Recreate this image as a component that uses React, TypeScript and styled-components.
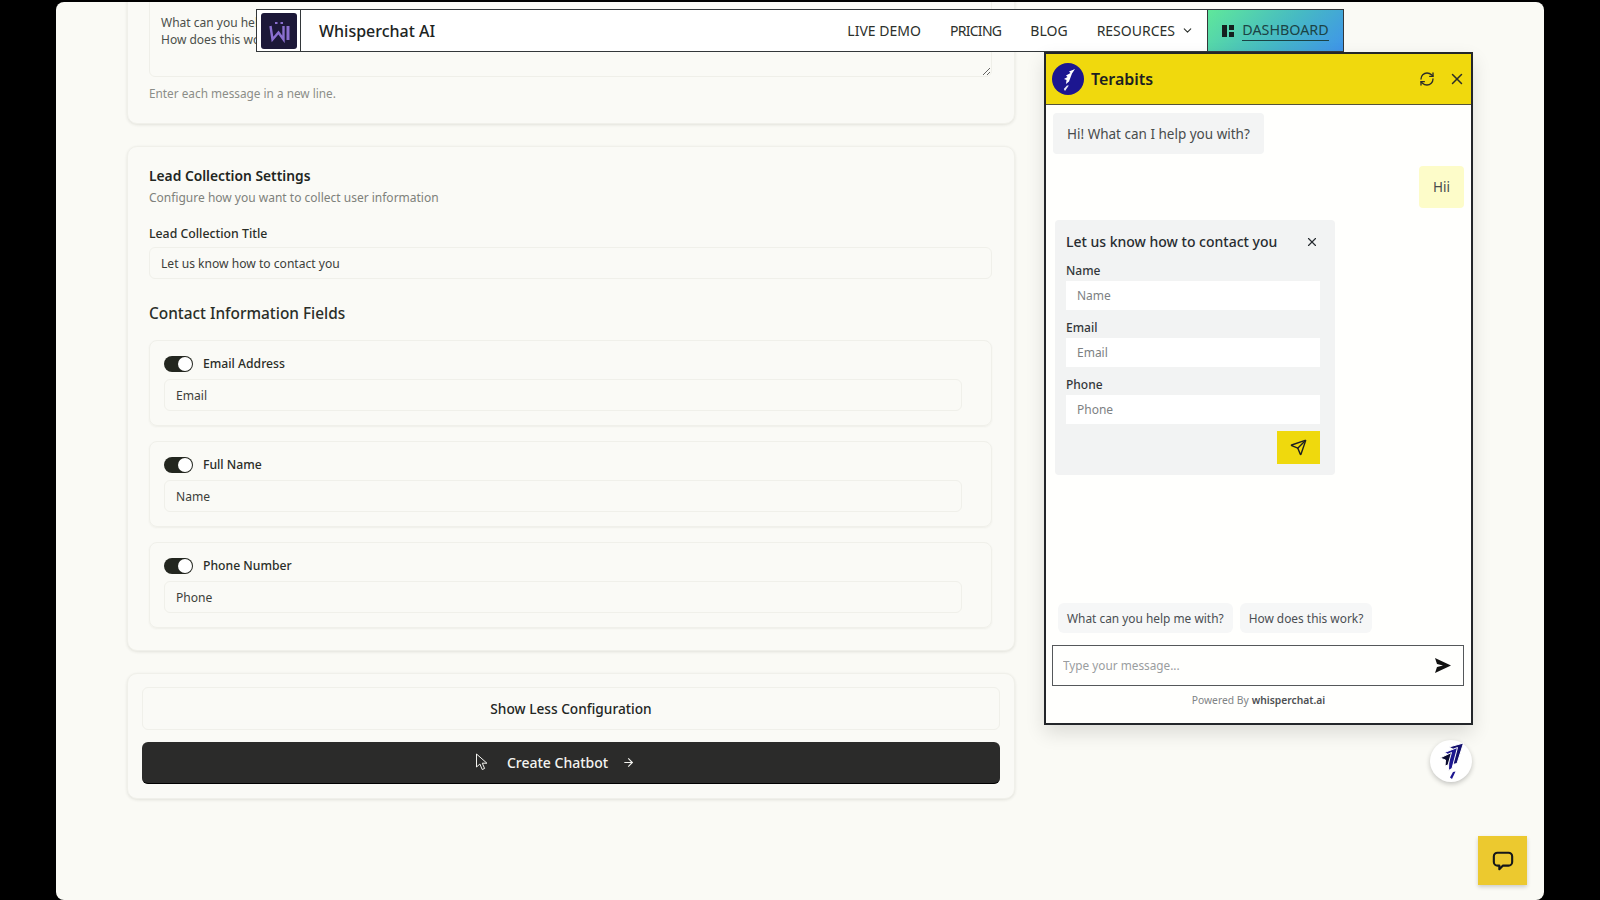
import React from "react";
import styled, { createGlobalStyle } from "styled-components";
import { ArrowRight, ChevronDown, RefreshCw, Send, X } from "lucide-react";

const FONT = `"Noto Sans", "Liberation Sans", sans-serif`;

const GlobalStyle = createGlobalStyle`
  html, body { margin: 0; height: 100%; background: #000; }
  * { box-sizing: border-box; }
  body { font-family: ${FONT}; color: #1f2420; }
  input, textarea, button { font-family: ${FONT}; }
`;

const Backdrop = styled.div`
  width: 1600px;
  height: 900px;
  background: #000;
  padding: 2px 56px 0;
  overflow: hidden;
`;

const Screen = styled.main`
  position: relative;
  width: 1488px;
  height: 898px;
  background: #fafaf5;
  border-radius: 8px;
  overflow: hidden;
`;

const FormColumn = styled.section`
  width: 888px;
  margin: -30px 0 0 71px;
  display: flex;
  flex-direction: column;
  gap: 22px;
`;

const Card = styled.div`
  background: #fafaf6;
  border: 1px solid #f0f0ea;
  border-radius: 10px;
  box-shadow: 0 1px 3px rgba(60, 60, 40, 0.12);
  padding: 22px 22px 21px 21px;
`;

const MessagesBox = styled.textarea`
  display: block;
  width: 100%;
  height: 82px;
  padding: 18px 11px 0;
  border: 1px solid #efefe9;
  border-radius: 6px;
  background: #fafaf6;
  font-size: 12px;
  line-height: 17px;
  color: #4b4f4a;
  outline: none;
`;

const Hint = styled.p`
  margin: 7px 0 0;
  font-size: 11.8px;
  line-height: 18px;
  color: #8b8d88;
`;

const LeadCard = styled(Card)`
  height: 505px;
  padding-top: 19px;
`;

const CardTitle = styled.h2`
  margin: 0;
  font-size: 13.8px;
  line-height: 19px;
  font-weight: 600;
  color: #22261f;
`;

const CardSub = styled.p`
  margin: 4px 0 0;
  font-size: 12px;
  line-height: 18px;
  color: #7e817b;
`;

const FieldLabel = styled.label`
  display: block;
  margin: 18px 0 5px;
  font-size: 12.3px;
  line-height: 17px;
  font-weight: 500;
  color: #2a2e28;
`;

const TextField = styled.input`
  display: block;
  width: 100%;
  height: 32px;
  padding: 0 11px;
  border: 1px solid #f0f0ea;
  border-radius: 6px;
  background: #fafaf6;
  font-size: 12.1px;
  color: #3c403a;
  outline: none;
`;

const SectionTitle = styled.h3`
  margin: 24px 0 15px;
  font-size: 15.4px;
  line-height: 22px;
  font-weight: 500;
  color: #2a2e28;
`;

const FieldList = styled.div`
  display: flex;
  flex-direction: column;
  gap: 15px;
`;

const FieldCard = styled.div`
  height: 86px;
  padding: 15px 29px 0 14px;
  border: 1px solid #f0f0ea;
  border-radius: 8px;
  box-shadow: 0 1px 2px rgba(60, 60, 40, 0.06);
`;

const FieldHead = styled.div`
  display: flex;
  align-items: center;
  gap: 10px;
  height: 15px;
  margin-bottom: 8px;
  font-size: 12.2px;
  font-weight: 500;
  color: #2a2e28;
`;

const Toggle = styled.span`
  position: relative;
  width: 29px;
  height: 16px;
  border-radius: 8px;
  background: #23261f;
  &::after {
    content: "";
    position: absolute;
    top: 1px;
    right: 1px;
    width: 14px;
    height: 14px;
    border-radius: 50%;
    background: #fff;
  }
`;

const ActionCard = styled(Card)`
  height: 126px;
  padding: 13px 14px;
  display: flex;
  flex-direction: column;
  gap: 12px;
`;

const GhostButton = styled.button`
  height: 43px;
  border: 1px solid #f0f0ea;
  border-radius: 6px;
  background: #fafaf6;
  font-size: 13.7px;
  font-weight: 500;
  color: #23261f;
`;

const PrimaryButton = styled.button`
  position: relative;
  height: 42px;
  display: flex;
  align-items: center;
  justify-content: center;
  gap: 14px;
  border: none;
  border-bottom: 1px solid #000;
  border-radius: 6px;
  background: #2b2b2a;
  font-size: 14px;
  font-weight: 500;
  color: #f4f4f0;
`;

const PointerIcon = styled.svg`
  position: absolute;
  left: 333px;
  top: 11px;
  width: 14px;
  height: 18px;
`;

const Navbar = styled.header`
  position: absolute;
  left: 200px;
  top: 7px;
  width: 1088px;
  height: 43px;
  display: flex;
  align-items: stretch;
  background: #fff;
  border: 1px solid #33373a;
`;

const LogoBox = styled.div`
  width: 44px;
  display: flex;
  align-items: center;
  justify-content: center;
  border-right: 1px solid #33373a;
`;

const Brand = styled.div`
  margin-left: 18px;
  flex: 1;
  align-self: center;
  font-size: 16px;
  font-weight: 500;
  color: #20241f;
`;

const NavLinks = styled.nav`
  display: flex;
  align-items: center;
  gap: 29px;
  margin-right: 13px;
`;

const NavLink = styled.a<{ $squeeze?: boolean }>`
  display: flex;
  align-items: center;
  gap: 6px;
  font-size: 14px;
  letter-spacing: ${(p) => (p.$squeeze ? "-0.7px" : "0")};
  color: #2c302c;
`;

const DashboardLink = styled.a`
  width: 136px;
  display: flex;
  align-items: center;
  justify-content: center;
  gap: 8px;
  background: linear-gradient(135deg, #5fe89a 0%, #46b9c4 55%, #3f94ea 100%);
  border-left: 1px solid #33373a;
  font-size: 14.3px;
  color: #1b4344;
`;

const DashLabel = styled.span`
  border-bottom: 1.5px solid #1b4344;
  line-height: 19px;
  padding-bottom: 1px;
`;

const ChatWindow = styled.aside`
  position: absolute;
  left: 988px;
  top: 50px;
  width: 429px;
  height: 673px;
  display: flex;
  flex-direction: column;
  background: #fffffd;
  border: 2px solid #23262a;
  box-shadow: 0 8px 18px rgba(0, 0, 0, 0.12);
`;

const ChatHeader = styled.div`
  height: 51px;
  flex: none;
  display: flex;
  align-items: center;
  gap: 7px;
  padding: 0 5px 0 6px;
  background: #f0d90d;
  border-bottom: 1px solid #55533a;
`;

const ChatName = styled.div`
  flex: 1;
  font-size: 16px;
  font-weight: 600;
  color: #1d1f22;
`;

const HeaderAction = styled.span`
  display: flex;
  margin-left: 6px;
  color: #2b2d2a;
`;

const ChatBody = styled.div`
  flex: 1;
  display: flex;
  flex-direction: column;
  align-items: flex-start;
  padding: 8px 7px 0 6px;
`;

const BotBubble = styled.div`
  margin-left: 1px;
  padding: 0 14px;
  height: 41px;
  display: flex;
  align-items: center;
  border-radius: 4px;
  background: #f3f4f4;
  font-size: 13.5px;
  color: #484c4c;
`;

const UserBubble = styled.div`
  align-self: flex-end;
  margin: 12px 0 12px;
  width: 45px;
  height: 42px;
  display: flex;
  align-items: center;
  justify-content: center;
  border-radius: 4px;
  background: #fdfcc9;
  font-size: 13.5px;
  color: #484c4c;
`;

const LeadForm = styled.form`
  margin-left: 3px;
  width: 280px;
  height: 255px;
  padding: 12px 15px 0 11px;
  border-radius: 4px;
  background: #f2f3f3;
`;

const LeadHead = styled.div`
  display: flex;
  align-items: center;
  justify-content: space-between;
  height: 19px;
  padding-right: 1px;
  font-size: 14px;
  font-weight: 500;
  color: #282c30;
`;

const LeadLabel = styled.label`
  display: block;
  margin: 0 0 2px;
  font-size: 12px;
  line-height: 17px;
  font-weight: 500;
  color: #33373a;
`;

const LeadFields = styled.div`
  margin-top: 11px;
  display: flex;
  flex-direction: column;
  gap: 9px;
`;

const LeadInput = styled.input`
  display: block;
  width: 100%;
  height: 29px;
  padding: 0 11px;
  border: none;
  background: #fff;
  font-size: 12px;
  outline: none;
  &::placeholder { color: #7d8183; }
`;

const LeadSend = styled.button`
  display: flex;
  align-items: center;
  justify-content: center;
  margin: 7px 0 0 auto;
  width: 43px;
  height: 33px;
  border: none;
  background: #efd90d;
  color: #1d1f22;
`;

const Suggestions = styled.div`
  flex: none;
  display: flex;
  gap: 7px;
  padding: 0 12px;
`;

const Chip = styled.span`
  height: 30px;
  display: flex;
  align-items: center;
  padding: 0 9px;
  border-radius: 6px;
  background: #f6f7f7;
  font-size: 11.9px;
  color: #4a4e52;
`;

const Composer = styled.div`
  flex: none;
  margin: 12px 7px 0 6px;
  height: 41px;
  display: flex;
  align-items: center;
  padding: 0 12px 0 10px;
  border: 1.5px solid #55585a;
`;

const ComposerInput = styled.input`
  flex: 1;
  border: none;
  padding: 0 0 2px;
  background: none;
  font-size: 11.8px;
  outline: none;
  &::placeholder { color: #9a9d9f; }
`;

const PoweredBy = styled.div`
  flex: none;
  height: 37px;
  padding-top: 6px;
  display: flex;
  align-items: flex-start;
  justify-content: center;
  gap: 3px;
  font-size: 10.3px;
  line-height: 16px;
  color: #808385;
`;

const PoweredName = styled.b`
  font-weight: 600;
  color: #4d5053;
`;

const Launcher = styled.div`
  position: absolute;
  left: 1374px;
  top: 738px;
  width: 42px;
  height: 42px;
  display: flex;
  align-items: center;
  justify-content: center;
  border-radius: 50%;
  background: #fff;
  box-shadow: 0 2px 5px rgba(0, 0, 0, 0.22);
`;

const HelpButton = styled.div`
  position: absolute;
  left: 1422px;
  top: 834px;
  width: 49px;
  height: 49px;
  display: flex;
  align-items: center;
  justify-content: center;
  background: #ecc92f;
  box-shadow: 0 2px 4px rgba(0, 0, 0, 0.18);
  color: #15171a;
`;

const WhisperLogo = () => (
  <svg width="36" height="36" viewBox="0 0 36 36">
    <rect width="36" height="36" rx="3" fill="#1c1838" />
    <path d="M9.5 13l2 13.5 6-7 5 7V13" fill="none" stroke="#8a6fd0" strokeWidth="2.4" />
    <path d="M27 13v14" stroke="#8a6fd0" strokeWidth="3" />
    <path d="M14 10h2.5M19.5 10h2.5" stroke="#8a6fd0" strokeWidth="2" />
  </svg>
);

const TerabitsAvatar = () => (
  <svg width="32" height="32" viewBox="0 0 32 32">
    <circle cx="16" cy="16" r="16" fill="#1c1690" />
    <path d="M23 6l-6 2.5 1.5 1.5-4.5 2.5 1.5 1.5-3.5 2 2.5 1-.5 4 3-2.5 3-8z" fill="#fff" />
    <path d="M15 22.5h1.8L13 28l-1.2-2z" fill="#e8e8f6" />
  </svg>
);

// three stacked flags, back to front, the white edge keeps them apart
const TerabitsMark = () => (
  <svg width="25" height="38" viewBox="0 0 25 38">
    <g stroke="#fff" strokeWidth="1">
      <path d="M24.5 1L10 5l4.5 2.5-.5 15 4-1z" fill="#14106e" />
      <path d="M18.5 5.5L5.5 10.5l4.5 2.5-.5 15.5 3.5-2z" fill="#1c1690" />
      <path d="M12.5 10.5L1 16l5.5 2-.5 6 3-1z" fill="#0c0c30" />
    </g>
    <path d="M14 30l2.5-.5L13 37l-2-1.5z" fill="#1c1690" />
  </svg>
);

const Pointer = () => (
  <PointerIcon viewBox="0 0 14 18">
    <path d="M1.5 1v13l3.4-3 2.3 5.5 2.4-1-2.3-5.3h4.6z" fill="#2b2b2a" stroke="#f4f4f0" strokeWidth="1" />
  </PointerIcon>
);

const DashGlyph = () => (
  <svg width="12" height="12" viewBox="0 0 12 12">
    <path d="M0 0h5v12H0zM7 0h5v5H7zM7 7h5v5H7z" fill="#15201f" />
  </svg>
);

const ChatGlyph = () => (
  <svg width="22" height="22" viewBox="0 0 24 24" fill="none" stroke="currentColor" strokeWidth="2.3" strokeLinejoin="round">
    <path d="M6 3h12a4 4 0 0 1 4 4v6a4 4 0 0 1-4 4h-6l-4 4v-4H6a4 4 0 0 1-4-4V7a4 4 0 0 1 4-4z" />
  </svg>
);

const contactFields = [
  { label: "Email Address", value: "Email" },
  { label: "Full Name", value: "Name" },
  { label: "Phone Number", value: "Phone" },
];

const leadFields = ["Name", "Email", "Phone"];

export default function App() {
  return (
    <>
      <GlobalStyle />
      <Backdrop>
        <Screen>
          <FormColumn>
            <Card>
              <MessagesBox readOnly defaultValue={"What can you help me with?\nHow does this work?"} />
              <Hint>Enter each message in a new line.</Hint>
            </Card>
            <LeadCard>
              <CardTitle>Lead Collection Settings</CardTitle>
              <CardSub>Configure how you want to collect user information</CardSub>
              <FieldLabel>Lead Collection Title</FieldLabel>
              <TextField readOnly value="Let us know how to contact you" />
              <SectionTitle>Contact Information Fields</SectionTitle>
              <FieldList>
                {contactFields.map((field) => (
                  <FieldCard key={field.label}>
                    <FieldHead>
                      <Toggle />
                      {field.label}
                    </FieldHead>
                    <TextField readOnly value={field.value} />
                  </FieldCard>
                ))}
              </FieldList>
            </LeadCard>
            <ActionCard>
              <GhostButton>Show Less Configuration</GhostButton>
              <PrimaryButton>
                Create Chatbot
                <ArrowRight size={13} />
                <Pointer />
              </PrimaryButton>
            </ActionCard>
          </FormColumn>

          <Navbar>
            <LogoBox>
              <WhisperLogo />
            </LogoBox>
            <Brand>Whisperchat AI</Brand>
            <NavLinks>
              <NavLink>LIVE DEMO</NavLink>
              <NavLink $squeeze>PRICING</NavLink>
              <NavLink>BLOG</NavLink>
              <NavLink>
                RESOURCES <ChevronDown size={13} />
              </NavLink>
            </NavLinks>
            <DashboardLink>
              <DashGlyph />
              <DashLabel>DASHBOARD</DashLabel>
            </DashboardLink>
          </Navbar>

          <ChatWindow>
            <ChatHeader>
              <TerabitsAvatar />
              <ChatName>Terabits</ChatName>
              <HeaderAction>
                <RefreshCw size={16} />
              </HeaderAction>
              <HeaderAction>
                <X size={18} />
              </HeaderAction>
            </ChatHeader>
            <ChatBody>
              <BotBubble>Hi! What can I help you with?</BotBubble>
              <UserBubble>Hii</UserBubble>
              <LeadForm>
                <LeadHead>
                  Let us know how to contact you
                  <X size={14} />
                </LeadHead>
                <LeadFields>
                  {leadFields.map((name) => (
                    <div key={name}>
                      <LeadLabel>{name}</LeadLabel>
                      <LeadInput placeholder={name} />
                    </div>
                  ))}
                </LeadFields>
                <LeadSend type="button">
                  <Send size={17} />
                </LeadSend>
              </LeadForm>
            </ChatBody>
            <Suggestions>
              <Chip>What can you help me with?</Chip>
              <Chip>How does this work?</Chip>
            </Suggestions>
            <Composer>
              <ComposerInput placeholder="Type your message..." />
              <svg width="16" height="15" viewBox="0 0 16 15">
                <path d="M0 0l16 7.5L0 15l2-6 6-1.5L2 6z" fill="#111" />
              </svg>
            </Composer>
            <PoweredBy>
              Powered By <PoweredName>whisperchat.ai</PoweredName>
            </PoweredBy>
          </ChatWindow>

          <Launcher>
            <TerabitsMark />
          </Launcher>
          <HelpButton>
            <ChatGlyph />
          </HelpButton>
        </Screen>
      </Backdrop>
    </>
  );
}
